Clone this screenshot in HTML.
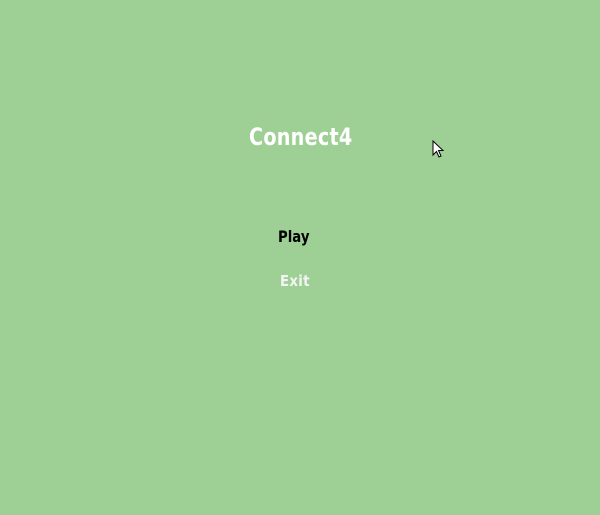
<!DOCTYPE html>
<html><head><style>
html,body{margin:0;width:600px;height:515px;background:#9ecf95;overflow:hidden;font-family:"DejaVu Sans","Liberation Sans",sans-serif;font-weight:bold;}
.t{position:absolute;white-space:nowrap;transform-origin:0 0;}
</style></head><body>
<div class="t" style="left:249px;top:123px;font-size:24px;color:#fff;letter-spacing:0.3px;transform:scaleX(0.80);">Connect4</div>
<div class="t" style="left:278px;top:227px;font-size:16px;color:#000;transform:scaleX(0.83);">Play</div>
<div class="t" style="left:280px;top:272px;font-size:15px;color:#f4f4f4;letter-spacing:0.3px;transform:scaleX(0.89);">Exit</div>
<svg class="t" style="left:432px;top:140px" width="14" height="20" viewBox="0 0 14 20"><path d="M1 1 L1 15 L4.5 11.5 L7 17 L9 16 L6.5 10.5 L11 10.5 Z" fill="#fff" stroke="#000" stroke-width="1"/></svg>
</body></html>
